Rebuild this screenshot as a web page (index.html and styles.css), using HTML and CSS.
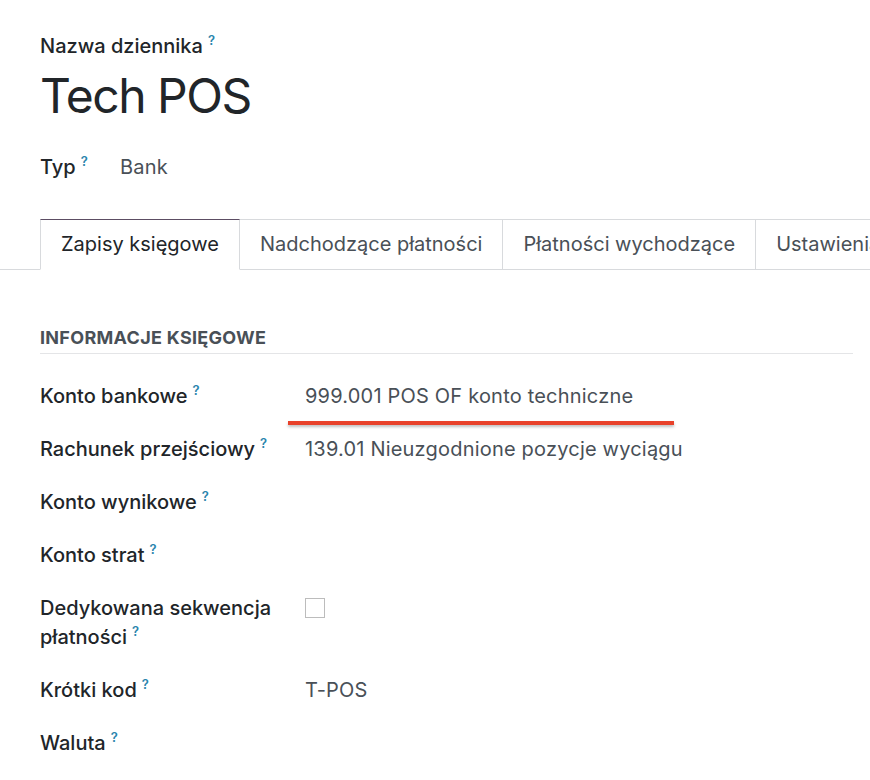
FILE: index.html
```html
<!DOCTYPE html>
<html lang="pl">
<head>
<meta charset="utf-8">
<link rel="stylesheet" href="styles.css">
</head>
<body>
<div class="sheet">
  <div class="title-block">
    <div class="name-label">Nazwa dziennika<sup class="help">?</sup></div>
    <h1 class="title">Tech POS</h1>
    <div class="type-row">
      <span class="type-label">Typ<sup class="help">?</sup></span>
      <span class="type-value">Bank</span>
    </div>
  </div>

  <div class="tabs">
    <div class="tab active">Zapisy księgowe</div>
    <div class="tab">Nadchodzące płatności</div>
    <div class="tab">Płatności wychodzące</div>
    <div class="tab">Ustawienia</div>
  </div>

  <div class="group">
    <div class="group-title">INFORMACJE KSIĘGOWE</div>
    <div class="fields">
      <div class="label">Konto bankowe<sup class="help">?</sup></div>
      <div class="value">999.001 POS OF konto techniczne<span class="mark"></span></div>

      <div class="label">Rachunek przejściowy<sup class="help">?</sup></div>
      <div class="value">139.01 Nieuzgodnione pozycje wyciągu</div>

      <div class="label">Konto wynikowe<sup class="help">?</sup></div>
      <div class="value"></div>

      <div class="label">Konto strat<sup class="help">?</sup></div>
      <div class="value"></div>

      <div class="label">Dedykowana sekwencja płatności<sup class="help">?</sup></div>
      <div class="value"><span class="checkbox"></span></div>

      <div class="label">Krótki kod<sup class="help">?</sup></div>
      <div class="value">T-POS</div>

      <div class="label">Waluta<sup class="help">?</sup></div>
      <div class="value"></div>
    </div>
  </div>
</div>
</body>
</html>
```
FILE: styles.css
```css
html, body {
  margin: 0;
  padding: 0;
  background: #ffffff;
}
body {
  font-family: Inter, "Noto Sans", "Liberation Sans", sans-serif;
  color: #212529;
  overflow: hidden;
  width: 870px;
  height: 780px;
}
.sheet {
  padding-top: 33px;
}
.title-block {
  padding-left: 40px;
}
.name-label {
  font-size: 20px;
  font-weight: 500;
  line-height: 26px;
  color: #212529;
}
.help {
  color: #2a85ad;
  font-size: 13px;
  font-weight: 600;
  margin-left: 5px;
  vertical-align: top;
  position: relative;
  top: -6px;
}
.title {
  margin: 8px 0 0 0;
  font-size: 48px;
  font-weight: 400;
  line-height: 58px;
  letter-spacing: -1.5px;
  color: #212529;
}
.type-row {
  display: flex;
  align-items: baseline;
  margin-top: 28px;
  font-size: 20px;
  line-height: 28px;
}
.type-label {
  width: 80px;
  font-weight: 500;
  color: #212529;
}
.type-value {
  color: #495057;
  letter-spacing: 0.2px;
}
.tabs {
  display: flex;
  margin-top: 38px;
  padding-left: 40px;
  border-bottom: 1px solid #d8dadd;
  white-space: nowrap;
  height: 50px;
}
.tab {
  box-sizing: border-box;
  padding: 0 20px;
  font-size: 20px;
  line-height: 48px;
  color: #495057;
  border: 1px solid #d8dadd;
  border-left: none;
  margin-bottom: -1px;
}
.tab:first-child {
  border-left: 1px solid #d8dadd;
}
.tab.active {
  color: #212529;
  border-top: 1px solid #5c4d63;
  border-bottom-color: #ffffff;
  background: #ffffff;
}
.group {
  margin: 0 17px 0 40px;
  padding-top: 57px;
}
.group-title {
  font-size: 18px;
  font-weight: 700;
  color: #495057;
  letter-spacing: 0.3px;
  line-height: 22px;
  padding-bottom: 4px;
  border-bottom: 1px solid #e4e5e7;
}
.fields {
  display: grid;
  grid-template-columns: 265px 1fr;
  row-gap: 24px;
  padding-top: 28px;
  font-size: 20px;
  line-height: 29px;
}
.label {
  font-weight: 500;
  color: #212529;
  padding-right: 10px;
}
.value {
  color: #495057;
  position: relative;
  letter-spacing: 0.2px;
}
.mark {
  position: absolute;
  left: -17px;
  top: 39px;
  width: 386px;
  height: 4px;
  background: #e8412a;
  box-shadow: 0 2px 3px rgba(0, 0, 0, 0.25);
}
.checkbox {
  display: inline-block;
  width: 18px;
  height: 18px;
  border: 1px solid #bcbcbc;
  margin-top: 4px;
  vertical-align: top;
}
```
